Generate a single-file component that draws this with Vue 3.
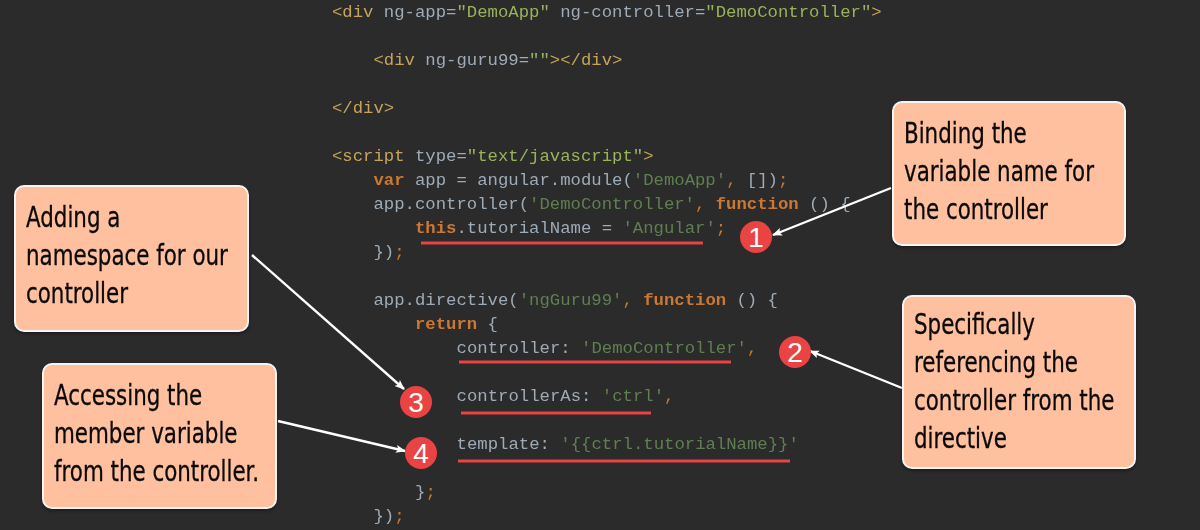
<script setup>
const t = (c, s) => ({ c, s })
const lines = [
  [0, t('tag', '<div '), t('plain', 'ng-app='), t('str', '"DemoApp"'), t('plain', ' ng-controller='), t('str', '"DemoController"'), t('tag', '>')],
  [0],
  [1, t('tag', '<div '), t('plain', 'ng-guru99='), t('str', '""'), t('tag', '></div>')],
  [0],
  [0, t('tag', '</div>')],
  [0],
  [0, t('tag', '<script '), t('plain', 'type='), t('str', '"text/javascript"'), t('tag', '>')],
  [1, t('kw', 'var'), t('plain', ' app = angular.module('), t('sq', "'DemoApp'"), t('punc', ','), t('plain', ' [])'), t('punc', ';')],
  [1, t('plain', 'app.controller('), t('sq', "'DemoController'"), t('punc', ','), t('plain', ' '), t('kw', 'function'), t('plain', ' () {')],
  [2, t('kw', 'this'), t('plain', '.tutorialName = '), t('sq', "'Angular'"), t('punc', ';')],
  [1, t('plain', '})'), t('punc', ';')],
  [0],
  [1, t('plain', 'app.directive('), t('sq', "'ngGuru99'"), t('punc', ','), t('plain', ' '), t('kw', 'function'), t('plain', ' () {')],
  [2, t('kw', 'return'), t('plain', ' {')],
  [3, t('plain', 'controller: '), t('sq', "'DemoController'"), t('punc', ',')],
  [0],
  [3, t('plain', 'controllerAs: '), t('sq', "'ctrl'"), t('punc', ',')],
  [0],
  [3, t('plain', 'template: '), t('sq', "'{{ctrl.tutorialName}}'")],
  [0],
  [2, t('plain', '}'), t('punc', ';')],
  [1, t('plain', '})'), t('punc', ';')]
]
const callouts = [
  { id: 'a', text: ['Adding a', 'namespace for our', 'controller'] },
  { id: 'b', text: ['Accessing the', 'member variable', 'from the controller.'] },
  { id: 'c', text: ['Binding the', 'variable name for', 'the controller'] },
  { id: 'd', text: ['Specifically', 'referencing the', 'controller from the', 'directive'] }
]
const underlines = [
  [421, 243, 703, 243],
  [459, 362, 731, 362],
  [461, 413, 651, 413],
  [458, 461, 790, 461]
]
const arrows = [
  [891, 188, 773, 235],
  [902, 388, 810, 351],
  [252, 255, 404, 389],
  [278, 421, 405, 451]
]
const badges = [
  { n: 1, x: 756, y: 237 },
  { n: 2, x: 795, y: 352 },
  { n: 3, x: 416, y: 402 },
  { n: 4, x: 421, y: 453 }
]
</script>

<template>
  <div class="page">
    <pre class="code"><div v-for="(line, i) in lines" :key="i" class="line" :class="'lvl' + line[0]"><span v-for="(tok, j) in line.slice(1)" :key="j" :class="tok.c">{{ tok.s }}</span></div></pre>

    <svg class="marks" width="1200" height="530" viewBox="0 0 1200 530">
      <defs>
        <marker id="head" markerUnits="userSpaceOnUse" markerWidth="11" markerHeight="10" refX="9" refY="5" orient="auto">
          <path d="M0 1 L10 5 L0 9 L2 5 Z" fill="#fff" />
        </marker>
      </defs>
      <line v-for="(u, i) in underlines" :key="'u' + i" :x1="u[0]" :y1="u[1]" :x2="u[2]" :y2="u[3]" stroke="#e94343" stroke-width="3" />
      <line v-for="(a, i) in arrows" :key="'a' + i" :x1="a[0]" :y1="a[1]" :x2="a[2]" :y2="a[3]" stroke="#fff" stroke-width="2.4" marker-end="url(#head)" />
      <g v-for="b in badges" :key="b.n">
        <circle :cx="b.x" :cy="b.y" r="16" fill="#e94343" />
        <text class="num" :x="b.x" :y="b.y + 10" text-anchor="middle">{{ b.n }}</text>
      </g>
    </svg>

    <div v-for="c in callouts" :key="c.id" class="callout" :class="c.id">
      <div v-for="row in c.text" :key="row" class="row">{{ row }}</div>
    </div>
  </div>
</template>

<style>
html, body { margin: 0; background: #2b2b2b; }
</style>

<style scoped>
.page {
  position: relative;
  width: 1200px;
  height: 530px;
  overflow: hidden;
  background: #2b2b2b;
}
.code {
  margin: 0;
  padding: 1px 0 0 332px;
  font-family: "Liberation Mono", monospace;
  font-size: 17.3px;
  line-height: 24px;
  filter: blur(0.35px);
}
.line { height: 24px; white-space: pre; }
.lvl1 { padding-left: 41.5px; }
.lvl2 { padding-left: 83px; }
.lvl3 { padding-left: 124.6px; }
.plain { color: #9dabb8; }
.tag { color: #c6a45a; }
.str { color: #98b35c; }
.sq { color: #5f7f50; }
.punc { color: #c2782e; }
.kw { color: #cc7832; font-weight: bold; }
.marks { position: absolute; left: 0; top: 0; }
.num {
  font-family: "Liberation Sans", sans-serif;
  font-size: 28px;
  fill: #fff;
}
.callout {
  position: absolute;
  box-sizing: border-box;
  background: #ffc09f;
  border: 2px solid #f4f4f4;
  border-radius: 10px;
  box-shadow: 0 2px 3px rgba(0, 0, 0, 0.35);
  color: #0c0a09;
  font-family: "DejaVu Sans Condensed", "DejaVu Sans", sans-serif;
  font-size: 29px;
  line-height: 38px;
  padding: 11px 0 0 10px;
  -webkit-text-stroke: 0.3px #0c0a09;
}
.row { white-space: nowrap; transform: scaleX(0.82); transform-origin: left center; }
.a { left: 14px; top: 185px; width: 235px; height: 147px; }
.b { left: 42px; top: 363px; width: 235px; height: 146px; }
.c { left: 892px; top: 101px; width: 234px; height: 145px; }
.d { left: 902px; top: 295px; width: 234px; height: 174px; padding-top: 8px; }
</style>
